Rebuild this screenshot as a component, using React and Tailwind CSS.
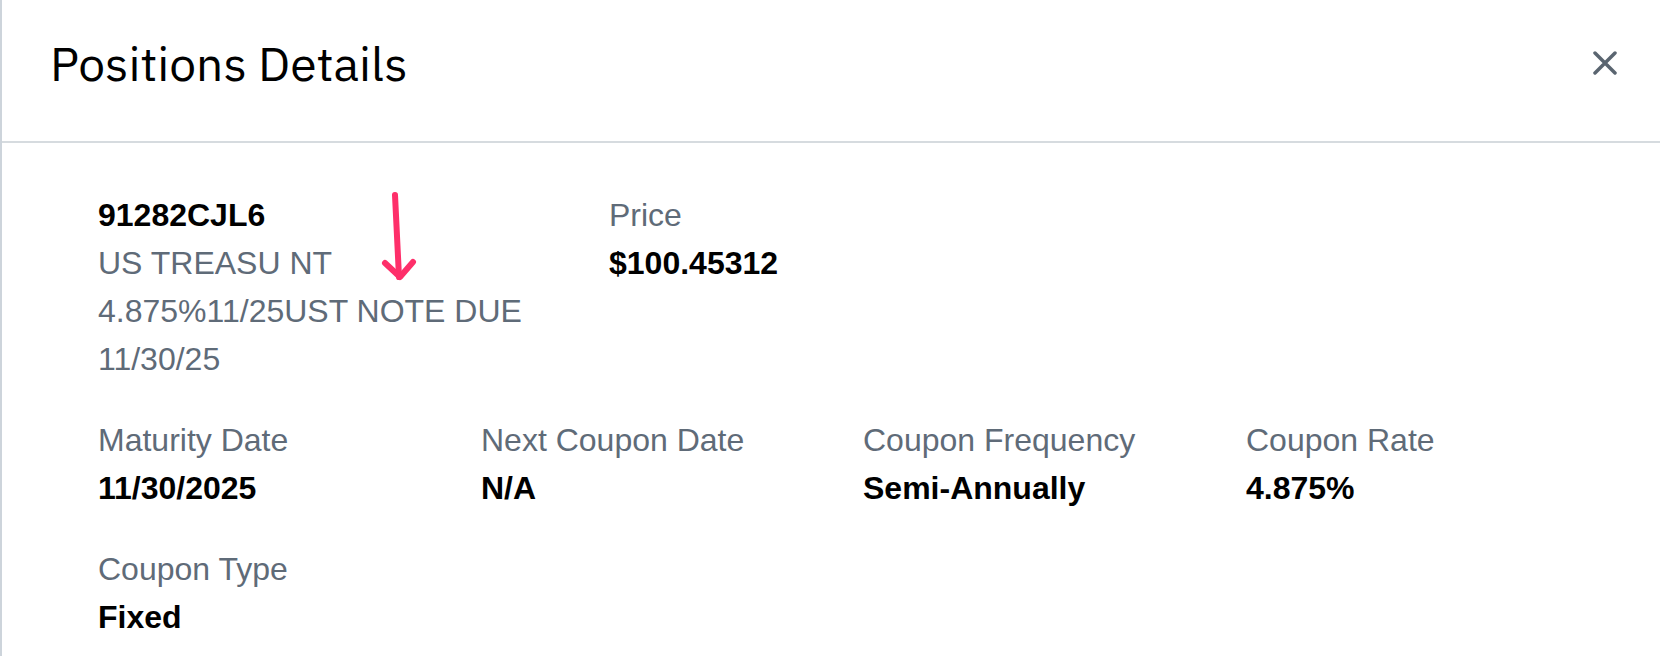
const Field = ({ label, value }) => (
  <div>
    <div className="text-[#5f6b78]">{label}</div>
    <div className="font-bold text-black">{value}</div>
  </div>
);

const App = () => {
  return (
    <div className="relative w-[1660px] h-[656px] bg-white border-l-2 border-[#cdd4db] overflow-hidden">
      {/* Header */}
      <div className="flex items-center justify-between h-[143px] border-b-2 border-[#d6dbdf] pl-[48px] pr-[43px] pb-[16px]">
        <h1 className="text-[48px] leading-none text-black font-['IBM_Plex_Sans',Roboto,sans-serif]">Positions Details</h1>
        <button className="text-[#5a6570]">
          <svg width="24" height="24" viewBox="0 0 24 24" fill="none" stroke="currentColor" strokeWidth="3.5" strokeLinecap="round">
            <path d="M2 2L22 22M22 2L2 22" />
          </svg>
        </button>
      </div>

      {/* Body */}
      <div className="pl-[96px] pt-[48px] text-[32px] leading-[48px] font-['Liberation_Sans',Arial,sans-serif]">
        <div className="flex">
          <div className="w-[511px]">
            <div className="font-bold text-black">91282CJL6</div>
            <div className="text-[#5f6b78]">
              US TREASU NT
              <br />
              4.875%11/25UST NOTE DUE
              <br />
              11/30/25
            </div>
          </div>
          <Field label="Price" value="$100.45312" />
        </div>

        <div className="grid grid-cols-[383px_382px_383px_auto] mt-[33px]">
          <Field label="Maturity Date" value="11/30/2025" />
          <Field label="Next Coupon Date" value="N/A" />
          <Field label="Coupon Frequency" value="Semi-Annually" />
          <Field label="Coupon Rate" value="4.875%" />
        </div>

        <div className="mt-[33px]">
          <Field label="Coupon Type" value="Fixed" />
        </div>
      </div>

      {/* Annotation arrow */}
      <svg className="absolute left-[378px] top-[188px]" width="40" height="96" viewBox="0 0 40 96" fill="none" stroke="#fe2f6a" strokeWidth="6" strokeLinecap="round" strokeLinejoin="round">
        <path d="M15 7L19 89" />
        <path d="M5 75L20 89L33 74" />
      </svg>
    </div>
  );
};

export default App;
